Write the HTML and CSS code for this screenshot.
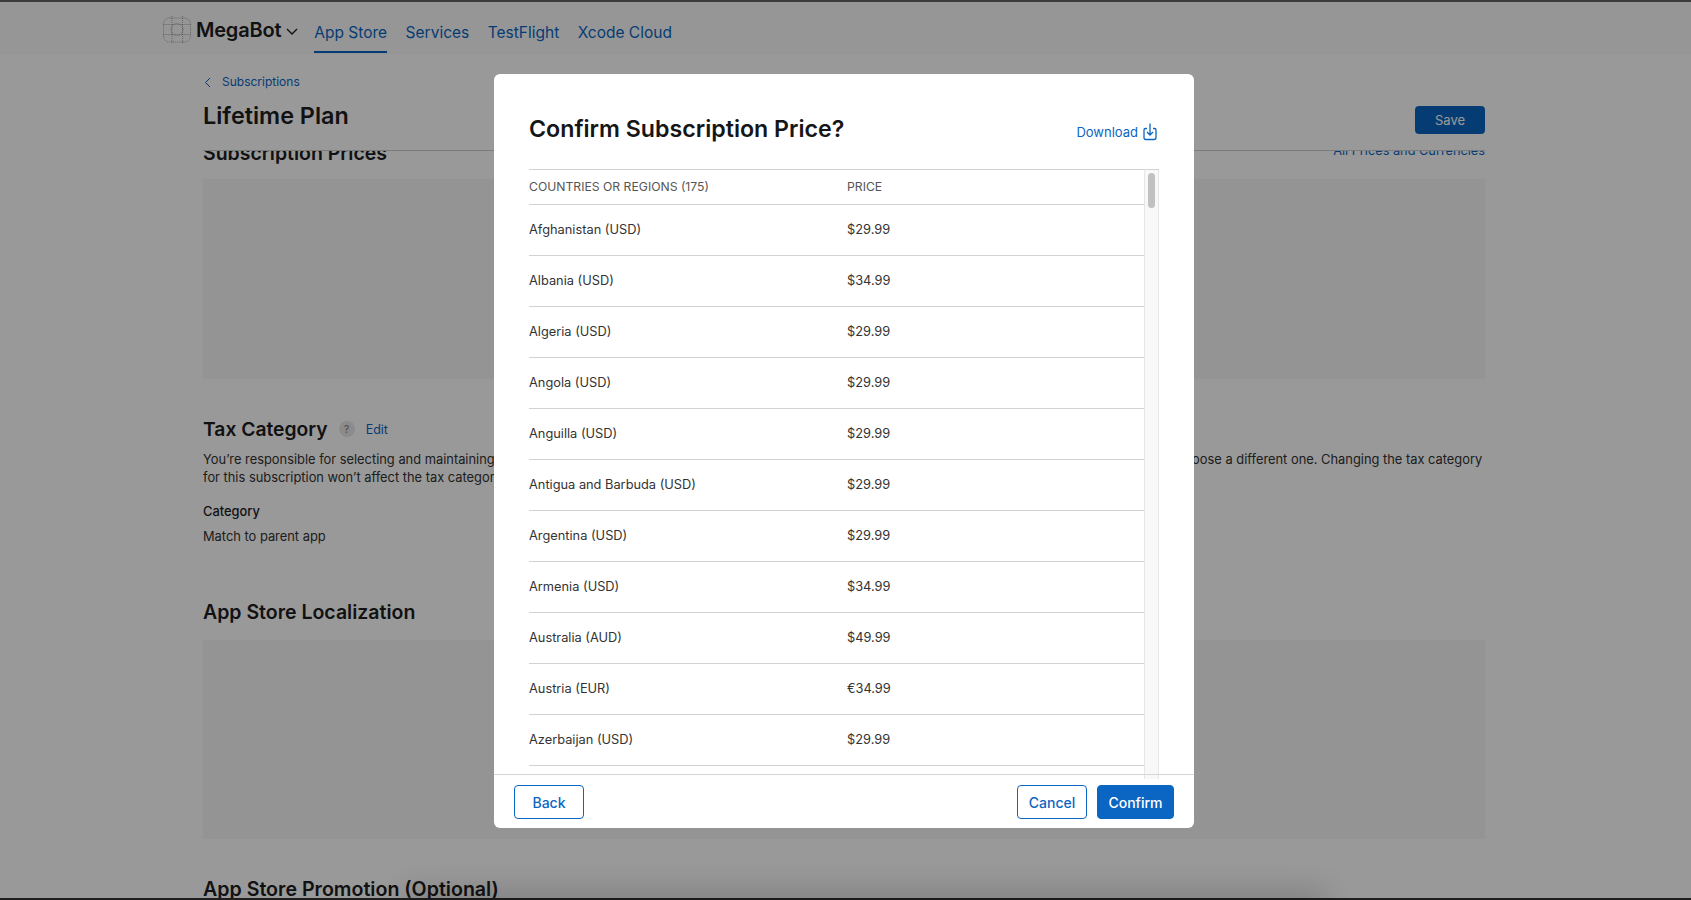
FILE: index.html
```html
<!DOCTYPE html>
<html lang="en">
<head>
    <meta charset="UTF-8">
    <meta name="viewport" content="width=device-width, initial-scale=1.0">
    <title>Confirm Subscription Price</title>
    <link rel="stylesheet" href="styles.css">
</head>
<body>
    <div class="page">
        <header class="topbar">
            <div class="brand">
                <svg class="brand-icon" width="28" height="28" viewBox="0 0 28 28" fill="none" stroke="#6e6e6e" stroke-width="0.6" stroke-dasharray="1 1">
                    <rect x="0.5" y="2" width="27" height="24" rx="6"/>
                    <path d="M9 0V28M19.500 0V28M0.500 8.500H27.500M0.500 18.500H27.500"/>
                    <circle cx="14" cy="13.500" r="6"/>
                </svg>
                <span class="brand-name">MegaBot</span>
                <svg class="brand-caret" width="12" height="7" viewBox="0 0 12 7" fill="none" stroke="#1a1a1a" stroke-width="1.3">
                    <path d="M1 1l5 5 5-5"/>
                </svg>
            </div>
            <nav class="nav">
                <a class="nav-link active">App Store</a>
                <a class="nav-link">Services</a>
                <a class="nav-link">TestFlight</a>
                <a class="nav-link">Xcode Cloud</a>
            </nav>
        </header>

        <div class="content">
            <div class="sticky-head">
                <a class="crumb">
                    <svg width="7" height="11" viewBox="0 0 7 11" fill="none" stroke="#0b65c2" stroke-width="1">
                        <path d="M6 1L1.500 5.500 6 10"/>
                    </svg>
                    <span>Subscriptions</span>
                </a>
                <div class="title-row">
                    <h1>Lifetime Plan</h1>
                    <button class="save-btn" type="button">Save</button>
                </div>
            </div>

            <div class="scroll-area">
                <div class="section-head prices-head">
                    <h2>Subscription Prices</h2>
                    <a class="all-prices">All Prices and Currencies</a>
                </div>
                <div class="card prices-card"></div>

                <div class="tax-head">
                    <h2>Tax Category</h2>
                    <span class="help">?</span>
                    <a class="edit">Edit</a>
                </div>
                <p class="tax-text">You’re responsible for selecting and maintaining the correct tax category for your subscription. This app will use the tax category of the parent app, but you can choose a different one. Changing the tax category for this subscription won’t affect the tax category of your app.</p>
                <div class="cat-label">Category</div>
                <div class="cat-value">Match to parent app</div>

                <h2 class="local-head">App Store Localization</h2>
                <div class="card local-card"></div>

                <h2 class="promo-head">App Store Promotion (Optional)</h2>
            </div>
        </div>
    </div>

    <div class="overlay"></div>
    <div class="bottom-shade"></div>

    <div class="modal">
        <div class="modal-head">
            <h3>Confirm Subscription Price?</h3>
            <a class="download">
                <span>Download</span>
                <svg class="download-icon" width="14" height="18" viewBox="0 0 14 18" fill="none" stroke="#0b65c2" stroke-width="1.300">
                    <path d="M4 5.500H2.500A1.500 1.500 0 0 0 1 7v7.500A2 2 0 0 0 3 16.500h8a2 2 0 0 0 2-2V7A1.500 1.500 0 0 0 11.500 5.500H10"/>
                    <path d="M7 0.500V12M4 9l3 3 3-3"/>
                </svg>
            </a>
        </div>
        <div class="table-wrap">
            <div class="table-scroll">
                <div class="row head-row">
                    <span class="col-name">COUNTRIES OR REGIONS (175)</span>
                    <span>PRICE</span>
                </div>
                <div id="rows"></div>
            </div>
            <div class="scrollbar"><div class="thumb"></div></div>
        </div>
        <div class="modal-foot">
            <button class="btn" type="button">Back</button>
            <div class="foot-right">
                <button class="btn" type="button">Cancel</button>
                <button class="btn primary" type="button">Confirm</button>
            </div>
        </div>
    </div>

    <script>
        const prices = [
            ["Afghanistan (USD)", "$29.99"],
            ["Albania (USD)", "$34.99"],
            ["Algeria (USD)", "$29.99"],
            ["Angola (USD)", "$29.99"],
            ["Anguilla (USD)", "$29.99"],
            ["Antigua and Barbuda (USD)", "$29.99"],
            ["Argentina (USD)", "$29.99"],
            ["Armenia (USD)", "$34.99"],
            ["Australia (AUD)", "$49.99"],
            ["Austria (EUR)", "€34.99"],
            ["Azerbaijan (USD)", "$29.99"]
        ];
        const rowsDiv = document.getElementById("rows");
        prices.forEach(item => {
            const row = document.createElement("div");
            row.className = "row";
            row.innerHTML = `<span class="col-name">${item[0]}</span><span>${item[1]}</span>`;
            rowsDiv.appendChild(row);
        });
    </script>
</body>
</html>
```

FILE: styles.css
```css
* {
    box-sizing: border-box;
}
html, body {
    margin: 0;
    height: 100%;
    overflow: hidden;
}
body {
    font-family: Inter, "Liberation Sans", sans-serif;
    color: #1d1d1f;
    background-color: #fff;
    position: relative;
}
a {
    color: #0b65c2;
}
h1, h2, h3, p {
    margin: 0;
}

/* page behind the dialog */
.page {
    height: 900px;
    overflow: hidden;
    border-top: 2px solid #646464;
    border-bottom: 2px solid #333;
}
.topbar {
    height: 52px;
    background-color: #fbfbfb;
    border-bottom: 1px solid #f5f5f5;
    padding-left: 163px;
    display: flex;
    align-items: flex-start;
}
.brand {
    display: flex;
    align-items: center;
    height: 32px;
    margin-top: 12px;
}
.brand-icon {
    margin-right: 5px;
}
.brand-name {
    font-size: 20px;
    font-weight: 600;
    letter-spacing: -0.2px;
}
.brand-caret {
    margin-left: 5px;
    margin-top: 2px;
}
.nav {
    display: flex;
    gap: 18.5px;
    margin-left: 16px;
}
.nav-link {
    display: block;
    height: 51px;
    padding-top: 21px;
    font-size: 15.5px;
    line-height: 20px;
    border-bottom: 2px solid transparent;
}
.nav-link.active {
    border-bottom-color: #0b65c2;
}
.content {
    padding: 0 206px 0 203px;
}
.sticky-head {
    height: 97px;
    border-bottom: 1px solid #cfcfcf;
    padding-top: 20px;
}
.crumb {
    display: flex;
    align-items: center;
    gap: 11px;
    font-size: 12px;
    line-height: 16px;
    padding-left: 1px;
}
.title-row {
    display: flex;
    justify-content: space-between;
    align-items: flex-start;
    margin-top: 10px;
}
h1 {
    font-size: 23.4px;
    line-height: 32px;
    font-weight: 600;
}
.save-btn {
    width: 70px;
    height: 28px;
    margin-top: 6px;
    border: none;
    border-radius: 4px;
    background-color: #0b65c2;
    color: #fff;
    font-family: inherit;
    font-size: 13px;
}
.scroll-area {
    height: 760px;
    overflow: hidden;
}
h2 {
    font-size: 19.5px;
    line-height: 26px;
    font-weight: 600;
}
.section-head {
    display: flex;
    justify-content: space-between;
    align-items: flex-start;
}
.prices-head {
    margin-top: -11px;
}
.all-prices {
    font-size: 12.75px;
    line-height: 16px;
    margin-top: 3px;
}
.card {
    background-color: #f7f7f7;
}
.prices-card {
    height: 200px;
    margin-top: 13px;
}
.tax-head {
    display: flex;
    align-items: center;
    margin-top: 37px;
}
.tax-head h2 {
    font-size: 19.3px;
}
.help {
    width: 16px;
    height: 16px;
    margin-left: 11px;
    border-radius: 50%;
    background-color: #e8e8e8;
    color: #777;
    font-size: 10px;
    line-height: 16px;
    text-align: center;
}
.edit {
    margin-left: 11px;
    font-size: 12.5px;
}
.tax-text {
    margin-top: 9px;
    font-size: 12.87px;
    line-height: 18px;
    color: #333;
}
.cat-label {
    margin-top: 16px;
    font-size: 12.87px;
    line-height: 18px;
    font-weight: 500;
}
.cat-value {
    margin-top: 7px;
    font-size: 12.87px;
    line-height: 18px;
    color: #333;
}
.local-head {
    margin-top: 53px;
}
.card.local-card {
    height: 199px;
    margin-top: 15px;
}
.promo-head {
    margin-top: 37px;
    font-size: 19.6px;
}

/* dim layer */
.overlay {
    position: absolute;
    inset: 0;
    background-color: rgba(0, 0, 0, 0.4);
}
.bottom-shade {
    position: absolute;
    left: 420px;
    right: 380px;
    bottom: -12px;
    height: 10px;
    box-shadow: 0 0 28px 14px rgba(0, 0, 0, 0.14);
}

/* dialog */
.modal {
    position: absolute;
    left: 494px;
    top: 74px;
    width: 700px;
    height: 754px;
    background-color: #fff;
    border-radius: 6px;
    display: flex;
    flex-direction: column;
    overflow: hidden;
}
.modal-head {
    height: 95px;
    flex-shrink: 0;
    padding: 0 35px;
    display: flex;
    justify-content: space-between;
}
h3 {
    font-size: 23.2px;
    line-height: 32px;
    font-weight: 600;
    margin-top: 39px;
    color: #161617;
}
.download {
    display: flex;
    align-items: flex-start;
    gap: 5px;
    margin-top: 49px;
    font-size: 13px;
    line-height: 18px;
}
.download-icon {
    margin-right: 2px;
}
.table-wrap {
    flex: 1;
    min-height: 0;
    margin: 0 35px -5px;
    display: flex;
    overflow: hidden;
}
.table-scroll {
    flex: 1;
    border-top: 1px solid #d2d2d2;
}
.row {
    display: flex;
    align-items: center;
    height: 51px;
    padding-bottom: 1px;
    border-bottom: 1px solid #d2d2d2;
    font-size: 12.8px;
    color: #333;
}
.head-row {
    height: 35px;
    font-size: 12.2px;
    color: #555;
}
.col-name {
    width: 318px;
}
.scrollbar {
    width: 15px;
    flex-shrink: 0;
    background-color: #f8f8f8;
    border-left: 1px solid #e6e6e6;
    border-right: 1px solid #e6e6e6;
    border-top: 1px solid #d2d2d2;
    padding: 3px 3px;
}
.thumb {
    height: 35px;
    border-radius: 4px;
    background-color: #c1c1c1;
}
.modal-foot {
    height: 54px;
    flex-shrink: 0;
    border-top: 1px solid #d6d6d6;
    padding: 10px 20px 0;
    display: flex;
    justify-content: space-between;
    align-items: flex-start;
}
.foot-right {
    display: flex;
    gap: 10px;
}
.btn {
    width: 70px;
    height: 34px;
    border: 1px solid #0b65c2;
    border-radius: 4px;
    background-color: #fff;
    color: #0b65c2;
    font-family: inherit;
    font-size: 14px;
    font-weight: 500;
}
.btn.primary {
    width: 77px;
    background-color: #0b65c2;
    color: #fff;
}
```
